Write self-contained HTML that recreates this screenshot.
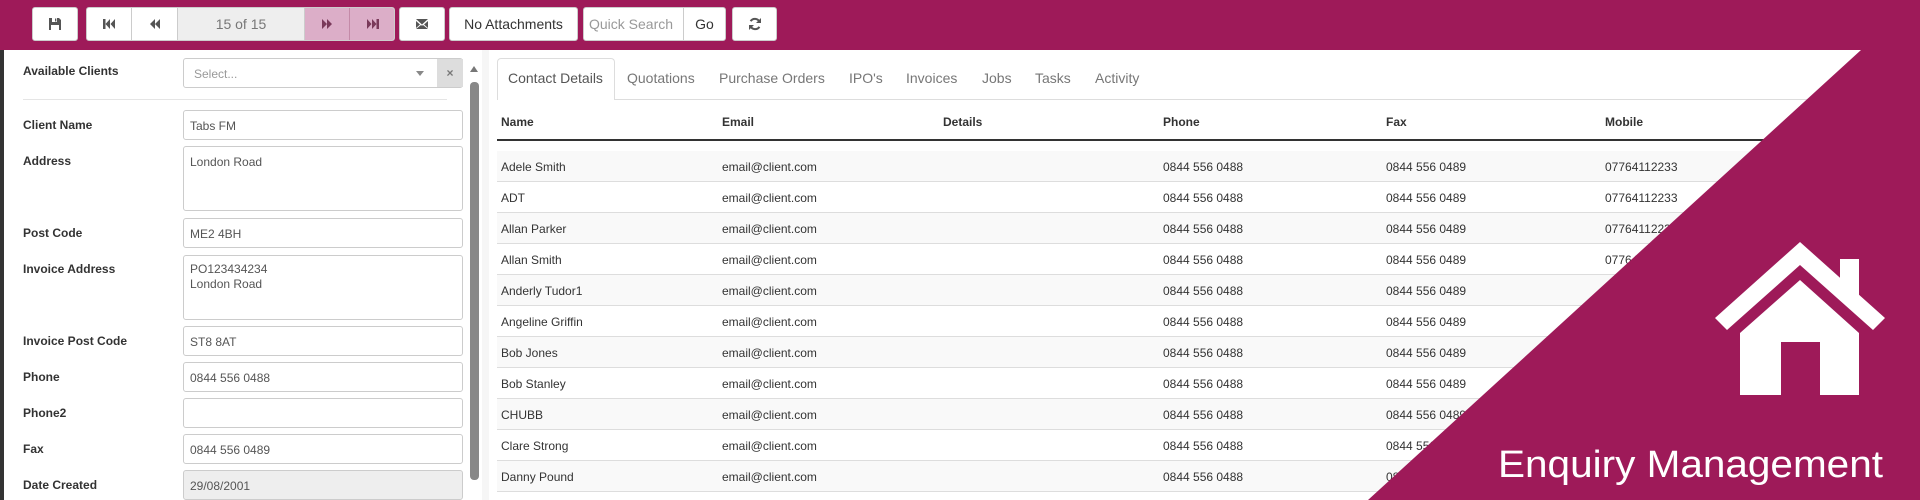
<!DOCTYPE html>
<html><head><meta charset="utf-8"><style>
*{box-sizing:border-box;margin:0;padding:0}
body{width:1920px;height:500px;overflow:hidden;background:#fff;font-family:"Liberation Sans",Arial,sans-serif;position:relative}
.a{position:absolute}
.top{left:0;top:0;width:1920px;height:50px;background:#9e1a59}
.btn{position:absolute;top:7px;height:34px;background:#fff;border:1px solid #ccc;border-radius:3px;display:flex;align-items:center;justify-content:center;font-size:14px;color:#333}
.lbl{position:absolute;left:23px;font-size:12px;font-weight:bold;color:#333}
.inp{position:absolute;left:183px;width:280px;height:30px;border:1px solid #ccc;border-radius:3px;font-size:12px;color:#555;padding:8px 0 0 6px;background:#fff}
.tab{position:absolute;top:70px;font-size:14px;color:#777}
.th{position:absolute;top:115px;font-size:12px;font-weight:bold;color:#333}
.row{position:absolute;left:497px;width:1400px;height:31px;border-bottom:1px solid #ddd;font-size:12px;color:#333}
.row span{position:absolute;top:9px}
</style></head><body>
<div class="a top"></div>
<div class="a" style="left:0;top:50px;width:4px;height:450px;background:#333"></div>

<div class="btn" style="left:32px;width:46px"><svg width="14" height="14" viewBox="0 0 14 14"><path d="M1 1h10l2 2v10H1z" fill="#555"/><rect x="4" y="1" width="5" height="4" fill="#fff"/><rect x="7" y="1.5" width="1.3" height="3" fill="#555"/><rect x="3" y="8" width="8" height="5" fill="#fff"/></svg></div>
<div class="a" style="left:86px;top:7px;width:309px;height:34px;border:1px solid #ccc;border-radius:3px;background:#fff;overflow:hidden">
 <div class="a" style="left:0;top:0;width:45px;height:32px;border-right:1px solid #ccc;display:flex;align-items:center;justify-content:center"><svg width="14" height="12" viewBox="0 0 14 12"><rect x="1" y="1" width="2.5" height="10" fill="#555"/><path d="M8 1v10L3.5 6zM13 1v10L8.5 6z" fill="#555"/></svg></div>
 <div class="a" style="left:45px;top:0;width:46px;height:32px;border-right:1px solid #ccc;display:flex;align-items:center;justify-content:center"><svg width="12" height="12" viewBox="0 0 12 12"><path d="M6 1v10L1 6zM11 1v10L6 6z" fill="#555"/></svg></div>
 <div class="a" style="left:91px;top:0;width:127px;height:32px;background:#eee;border-right:1px solid #ccc;font-size:14px;color:#777;text-align:center;line-height:32px">15 of 15</div>
 <div class="a" style="left:218px;top:0;width:45px;height:32px;background:#dcaec8;border-right:1px solid #c48aa8;display:flex;align-items:center;justify-content:center"><svg width="12" height="12" viewBox="0 0 12 12"><path d="M1 1v10l5-5zM6 1v10l5-5z" fill="#7a3a5a"/></svg></div>
 <div class="a" style="left:263px;top:0;width:46px;height:32px;background:#dcaec8;display:flex;align-items:center;justify-content:center"><svg width="14" height="12" viewBox="0 0 14 12"><path d="M1 1v10l4.5-5zM6 1v10l4.5-5z" fill="#7a3a5a"/><rect x="10.5" y="1" width="2.5" height="10" fill="#7a3a5a"/></svg></div>
</div>
<div class="btn" style="left:399px;width:46px"><svg width="14" height="12" viewBox="0 0 14 12"><path d="M1 1h12L7 6.5z M1 3l4 3.5L1 10z M13 3l-4 3.5 4 3.5z M1 11l5-4 1 .8 1-.8 5 4z" fill="#555"/></svg></div>
<div class="btn" style="left:449px;width:129px">No Attachments</div>
<div class="a" style="left:583px;top:7px;width:143px;height:34px;background:#fff;border:1px solid #ccc;border-radius:3px">
 <div class="a" style="left:0;top:0;width:100px;height:32px;border-right:1px solid #ccc;font-size:14px;color:#999;line-height:32px;padding-left:5px">Quick Search</div>
 <div class="a" style="left:100px;top:0;width:41px;height:32px;font-size:14px;color:#333;line-height:32px;text-align:center">Go</div>
</div>
<div class="btn" style="left:732px;width:45px"><svg width="14" height="14" viewBox="0 0 14 14"><path d="M11.5 5A5 5 0 0 0 2.6 4.2" stroke="#555" stroke-width="2" fill="none"/><path d="M13 1v5H8z" fill="#555"/><path d="M2.5 9a5 5 0 0 0 8.9.8" stroke="#555" stroke-width="2" fill="none"/><path d="M1 13V8h5z" fill="#555"/></svg></div>

<!-- left panel -->
<div class="lbl" style="top:64px">Available Clients</div>
<div class="a" style="left:183px;top:58px;width:280px;height:30px;border:1px solid #ccc;border-radius:3px;background:#fff">
 <span class="a" style="left:10px;top:8px;font-size:12px;color:#999">Select...</span>
 <span class="a" style="left:232px;top:12px;width:0;height:0;border-left:4px solid transparent;border-right:4px solid transparent;border-top:5px solid #888"></span>
 <div class="a" style="left:253px;top:0;width:26px;height:28px;background:#ddd;font-size:12px;color:#777;text-align:center;line-height:28px;font-weight:bold">×</div>
</div>
<div class="a" style="left:23px;top:99px;width:424px;height:1px;background:#e5e5e5"></div>
<div class="a" style="left:470px;top:66px;width:0;height:0;border-left:4px solid transparent;border-right:4px solid transparent;border-bottom:6px solid #777"></div>
<div class="a" style="left:470px;top:82px;width:9px;height:398px;background:#888;border-radius:4px"></div>
<div class="a" style="left:482px;top:50px;width:7px;height:450px;background:#f6f6f6"></div>

<div class="lbl" style="top:118px">Client Name</div><div class="inp" style="top:110px">Tabs FM</div>
<div class="lbl" style="top:154px">Address</div><div class="inp" style="top:146px;height:65px">London Road</div>
<div class="lbl" style="top:226px">Post Code</div><div class="inp" style="top:218px">ME2 4BH</div>
<div class="lbl" style="top:262px">Invoice Address</div><div class="inp" style="top:255px;height:65px;line-height:15px;padding-top:6px">PO123434234<br>London Road</div>
<div class="lbl" style="top:334px">Invoice Post Code</div><div class="inp" style="top:326px">ST8 8AT</div>
<div class="lbl" style="top:370px">Phone</div><div class="inp" style="top:362px">0844 556 0488</div>
<div class="lbl" style="top:406px">Phone2</div><div class="inp" style="top:398px"></div>
<div class="lbl" style="top:442px">Fax</div><div class="inp" style="top:434px">0844 556 0489</div>
<div class="lbl" style="top:478px">Date Created</div><div class="inp" style="top:470px;background:#eee">29/08/2001</div>

<!-- tabs -->
<div class="a" style="left:497px;top:99px;width:1400px;height:1px;background:#ddd"></div>
<div class="a" style="left:497px;top:58px;width:118px;height:42px;border:1px solid #ddd;border-bottom:none;border-radius:4px 4px 0 0;background:#fff"></div>
<div class="tab" style="left:508px;color:#555">Contact Details</div>
<div class="tab" style="left:627px">Quotations</div>
<div class="tab" style="left:719px">Purchase Orders</div>
<div class="tab" style="left:849px">IPO's</div>
<div class="tab" style="left:906px">Invoices</div>
<div class="tab" style="left:982px">Jobs</div>
<div class="tab" style="left:1035px">Tasks</div>
<div class="tab" style="left:1095px">Activity</div>

<div class="th" style="left:501px">Name</div>
<div class="th" style="left:722px">Email</div>
<div class="th" style="left:943px">Details</div>
<div class="th" style="left:1163px">Phone</div>
<div class="th" style="left:1386px">Fax</div>
<div class="th" style="left:1605px">Mobile</div>
<div class="a" style="left:497px;top:139px;width:1400px;height:2px;background:#333"></div>

<div class="row" style="top:151px;background:#f9f9f9"><span style="left:4px">Adele Smith</span><span style="left:225px">email@client.com</span><span style="left:666px">0844 556 0488</span><span style="left:889px">0844 556 0489</span><span style="left:1108px">07764112233</span></div>
<div class="row" style="top:182px"><span style="left:4px">ADT</span><span style="left:225px">email@client.com</span><span style="left:666px">0844 556 0488</span><span style="left:889px">0844 556 0489</span><span style="left:1108px">07764112233</span></div>
<div class="row" style="top:213px;background:#f9f9f9"><span style="left:4px">Allan Parker</span><span style="left:225px">email@client.com</span><span style="left:666px">0844 556 0488</span><span style="left:889px">0844 556 0489</span><span style="left:1108px">07764112233</span></div>
<div class="row" style="top:244px"><span style="left:4px">Allan Smith</span><span style="left:225px">email@client.com</span><span style="left:666px">0844 556 0488</span><span style="left:889px">0844 556 0489</span><span style="left:1108px">07764112233</span></div>
<div class="row" style="top:275px;background:#f9f9f9"><span style="left:4px">Anderly Tudor1</span><span style="left:225px">email@client.com</span><span style="left:666px">0844 556 0488</span><span style="left:889px">0844 556 0489</span></div>
<div class="row" style="top:306px"><span style="left:4px">Angeline Griffin</span><span style="left:225px">email@client.com</span><span style="left:666px">0844 556 0488</span><span style="left:889px">0844 556 0489</span></div>
<div class="row" style="top:337px;background:#f9f9f9"><span style="left:4px">Bob Jones</span><span style="left:225px">email@client.com</span><span style="left:666px">0844 556 0488</span><span style="left:889px">0844 556 0489</span></div>
<div class="row" style="top:368px"><span style="left:4px">Bob Stanley</span><span style="left:225px">email@client.com</span><span style="left:666px">0844 556 0488</span><span style="left:889px">0844 556 0489</span></div>
<div class="row" style="top:399px;background:#f9f9f9"><span style="left:4px">CHUBB</span><span style="left:225px">email@client.com</span><span style="left:666px">0844 556 0488</span><span style="left:889px">0844 556 0489</span></div>
<div class="row" style="top:430px"><span style="left:4px">Clare Strong</span><span style="left:225px">email@client.com</span><span style="left:666px">0844 556 0488</span><span style="left:889px">0844 556 0489</span></div>
<div class="row" style="top:461px;background:#f9f9f9"><span style="left:4px">Danny Pound</span><span style="left:225px">email@client.com</span><span style="left:666px">0844 556 0488</span><span style="left:889px">0844 556 0489</span></div>

<!-- triangle overlay -->
<svg class="a" style="left:0;top:0" width="1920" height="500" viewBox="0 0 1920 500">
 <polygon points="1861,50 1920,50 1920,500 1368,500" fill="#9e1a59"/>
 <polygon points="1715,318 1800,242 1885,318 1873,330 1800,265 1727,330" fill="#fff"/>
 <rect x="1840" y="259" width="19" height="40" fill="#fff"/>
 <polygon points="1740,333 1800,280 1859,333 1859,395 1820,395 1820,342 1781,342 1781,395 1740,395" fill="#fff"/>
 <text x="1883" y="477" text-anchor="end" font-family="Liberation Sans, sans-serif" font-size="38" fill="#fff" textLength="385" lengthAdjust="spacingAndGlyphs">Enquiry Management</text>
</svg>
</body></html>
